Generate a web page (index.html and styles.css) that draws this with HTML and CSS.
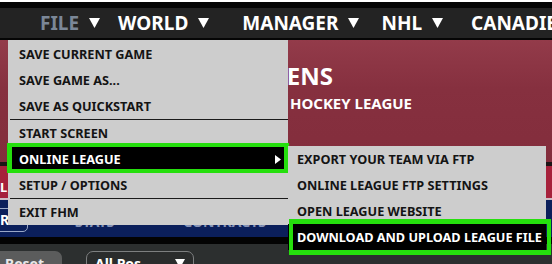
FILE: index.html
```html
<!DOCTYPE html>
<html>
<head>
<meta charset="utf-8">
<link rel="stylesheet" href="styles.css">
</head>
<body>
<div class="top-white"></div>
<nav class="navbar">
  <div class="nav-item nav-file"><span class="nav-label dim">FILE</span><svg class="caret" viewBox="0 0 11 10"><polygon points="0,0 11,0 5.5,10"/></svg></div>
  <div class="nav-item nav-world"><span class="nav-label">WORLD</span><svg class="caret" viewBox="0 0 11 10"><polygon points="0,0 11,0 5.5,10"/></svg></div>
  <div class="nav-item nav-manager"><span class="nav-label">MANAGER</span><svg class="caret" viewBox="0 0 11 10"><polygon points="0,0 11,0 5.5,10"/></svg></div>
  <div class="nav-item nav-nhl"><span class="nav-label">NHL</span><svg class="caret" viewBox="0 0 11 10"><polygon points="0,0 11,0 5.5,10"/></svg></div>
  <div class="nav-item nav-team"><span class="nav-label">CANADIENS</span></div>
</nav>
<section class="banner">
  <div class="banner-title">MONTREAL CANADIENS</div>
  <div class="banner-sub">NATIONAL HOCKEY LEAGUE</div>
</section>
<div class="sep-dark"></div>
<div class="redbar"><span class="red-tab">L</span></div>
<div class="sep-light"></div>
<div class="navybar">
  <div class="navy-btn">R</div>
  <span class="navy-tab tab-stats">STATS</span>
  <span class="navy-tab tab-contracts">CONTRACTS</span>
</div>
<div class="sep-black"></div>
<div class="toolbar">
  <div class="reset-btn">Reset</div>
  <div class="pos-select"><span>All Pos</span><svg class="select-caret" viewBox="0 0 10 9"><polygon points="0,0 10,0 5,9"/></svg></div>
</div>

<div class="menu file-menu">
  <div class="menu-item">SAVE CURRENT GAME</div>
  <div class="menu-item">SAVE GAME AS...</div>
  <div class="menu-item">SAVE AS QUICKSTART</div>
  <div class="menu-sep"></div>
  <div class="menu-item">START SCREEN</div>
  <div class="menu-item active hl-online">ONLINE LEAGUE<svg class="sub-arrow" viewBox="0 0 6 9"><polygon points="0,0 6,4.5 0,9"/></svg></div>
  <div class="menu-item">SETUP / OPTIONS</div>
  <div class="menu-sep"></div>
  <div class="menu-item">EXIT FHM</div>
</div>

<div class="menu sub-menu">
  <div class="menu-item">EXPORT YOUR TEAM VIA FTP</div>
  <div class="menu-item">ONLINE LEAGUE FTP SETTINGS</div>
  <div class="menu-item">OPEN LEAGUE WEBSITE</div>
  <div class="menu-item active hl-download">DOWNLOAD AND UPLOAD LEAGUE FILE</div>
</div>
</body>
</html>
```

FILE: styles.css
```css
html, body {
  margin: 0;
  padding: 0;
}
body {
  width: 552px;
  height: 264px;
  overflow: hidden;
  position: relative;
  background: #2c2f2f;
  font-family: "Noto Sans", "DejaVu Sans", sans-serif;
  font-weight: 700;
}
.top-white {
  height: 2px;
  background: #ffffff;
}
.navbar {
  height: 30px;
  border-top: 6px solid #050505;
  border-bottom: 2px solid #050505;
  background: #232323;
  display: flex;
  align-items: center;
  white-space: nowrap;
  padding-left: 40px;
  overflow: hidden;
}
.nav-item {
  display: flex;
  align-items: center;
  gap: 10px;
  flex: none;
}
.nav-label {
  font-size: 19px;
  line-height: 30px;
  color: #ffffff;
}
.nav-label.dim {
  color: #7b8797;
}
.caret {
  width: 11px;
  height: 10px;
  fill: #ffffff;
}
.nav-world { margin-left: 18px; }
.nav-manager { margin-left: 33px; }
.nav-nhl { margin-left: 22px; }
.nav-team { margin-left: 28px; }

.banner {
  height: 122px;
  box-sizing: border-box;
  padding-top: 22px;
  background: linear-gradient(#933b4a, #86303f 40%, #832d3c);
  color: #ffffff;
  white-space: nowrap;
}
.banner-title {
  width: 333px;
  text-align: right;
  font-size: 24px;
  line-height: 28px;
}
.banner-sub {
  width: 412px;
  text-align: right;
  font-size: 15px;
  line-height: 18px;
  margin-top: 4px;
}
.sep-dark {
  height: 4px;
  background: #1b1416;
}
.redbar {
  height: 32px;
  background: #a6213b;
  display: flex;
  align-items: flex-end;
}
.red-tab {
  color: #ffffff;
  font-size: 13px;
  line-height: 22px;
}
.sep-light {
  height: 2px;
  background: #cdbcc3;
}
.navybar {
  height: 37px;
  background: #0b1f5b;
  display: flex;
  align-items: center;
  position: relative;
}
.navy-btn {
  width: 34px;
  height: 24px;
  box-sizing: border-box;
  margin-left: -6px;
  margin-top: 2px;
  border: 1px solid #9aa8c8;
  border-radius: 5px;
  color: #ffffff;
  font-size: 14px;
  line-height: 22px;
  padding-left: 5px;
}
.navy-tab {
  color: #8593b8;
  font-size: 14px;
  line-height: 20px;
  margin-top: 6px;
}
.tab-stats { margin-left: 47px; }
.tab-contracts { margin-left: 69px; }
.sep-black {
  height: 7px;
  background: #030303;
}
.toolbar {
  padding-top: 7px;
  display: flex;
  align-items: flex-start;
}
.reset-btn {
  width: 62px;
  height: 24px;
  box-sizing: border-box;
  background: #5b5c5c;
  border-radius: 0 7px 0 0;
  color: #e8e8e8;
  font-size: 14px;
  line-height: 26px;
  padding-left: 5px;
}
.pos-select {
  margin-left: 24px;
  width: 108px;
  height: 24px;
  box-sizing: border-box;
  border: 1px solid #7d7f80;
  border-radius: 7px;
  background: #2a2c2c;
  color: #ffffff;
  font-size: 14px;
  line-height: 24px;
  padding-left: 8px;
  display: flex;
  align-items: flex-start;
}
.select-caret {
  width: 10px;
  height: 9px;
  fill: #ffffff;
  margin-left: auto;
  margin-right: 8px;
  margin-top: 7px;
}

.menu {
  position: absolute;
  background: #cdcdcd;
  color: #141414;
  font-size: 12.7px;
  white-space: nowrap;
}
.file-menu {
  left: 8px;
  top: 40px;
  width: 280px;
  height: 185px;
  box-sizing: border-box;
  padding-top: 1px;
}
.sub-menu {
  left: 288px;
  top: 146px;
  width: 258px;
}
.menu-item {
  height: 26px;
  line-height: 26px;
  padding-left: 11px;
  display: flex;
  align-items: center;
  position: relative;
}
.sub-menu .menu-item {
  padding-left: 9px;
}
.menu-sep {
  height: 1px;
  margin-left: 2px;
  background: #1a1a1a;
}
.menu-item.active {
  background: #000000;
  color: #ffffff;
}
.sub-arrow {
  width: 6px;
  height: 9px;
  fill: #ffffff;
  margin-left: auto;
  margin-right: 7px;
}
.hl-online::after,
.hl-download::after {
  content: "";
  position: absolute;
  border: 4px solid #25df0d;
  pointer-events: none;
}
.hl-online::after {
  top: -3px;
  bottom: -1px;
  left: -1px;
  right: -1px;
  border-left-width: 5px;
  border-right-width: 5px;
}
.hl-download::after {
  top: -5px;
  bottom: -5px;
  left: 1px;
  right: -5px;
  border-width: 5px 4px 5px 4px;
}
```
